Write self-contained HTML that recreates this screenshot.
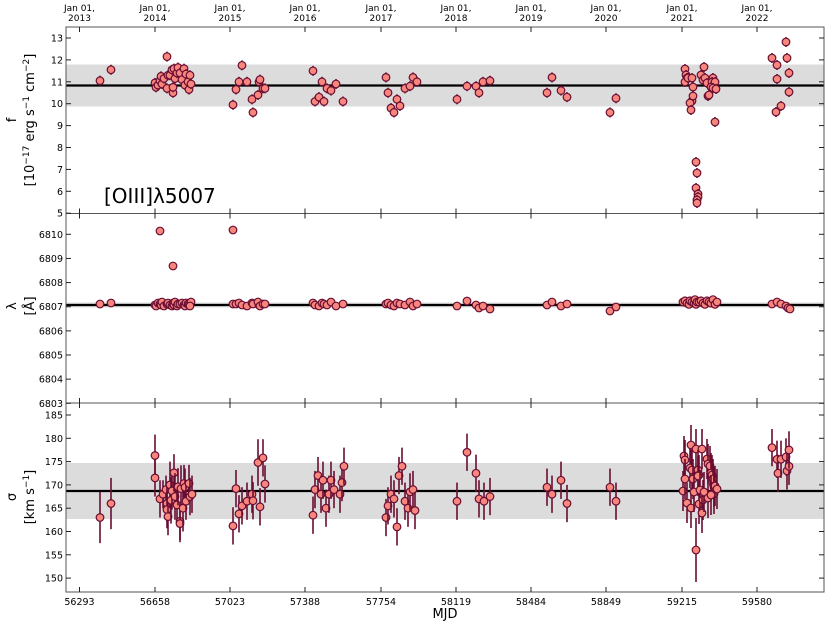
<!DOCTYPE html>
<html><head><meta charset="utf-8"><style>
body{margin:0;background:#fff;}
svg{display:block;font-family:"DejaVu Sans","Liberation Sans",sans-serif;}
</style></head><body>
<svg id="s" width="830" height="626" viewBox="0 0 830 626" xmlns="http://www.w3.org/2000/svg">
<rect width="830" height="626" fill="#fff"/>
<!-- bands -->
<rect x="66" y="64.5" width="758" height="42" fill="#dcdcdc"/>
<rect x="66" y="302.5" width="758" height="5" fill="#dcdcdc"/>
<rect x="66" y="463" width="758" height="56" fill="#dcdcdc"/>
<line x1="66" x2="824" y1="85.5" y2="85.5" stroke="#000" stroke-width="2.2"/>
<line x1="66" x2="824" y1="305" y2="305" stroke="#000" stroke-width="2.2"/>
<line x1="66" x2="824" y1="491" y2="491" stroke="#000" stroke-width="2.2"/>
<g id="pts"></g>
<g id="ax" stroke="#555" fill="none" stroke-width="1">
<rect x="66" y="27" width="758" height="186.5"/>
<rect x="66" y="213.5" width="758" height="189.5"/>
<rect x="66" y="403" width="758" height="189"/>
</g>
<g id="tk" stroke="#222" stroke-width="1"></g>
<g font-size="9" text-anchor="middle" fill="#000">
<text x="79.5" y="11">Jan 01,</text><text x="79.5" y="21">2013</text>
<text x="155" y="11">Jan 01,</text><text x="155" y="21">2014</text>
<text x="230" y="11">Jan 01,</text><text x="230" y="21">2015</text>
<text x="305" y="11">Jan 01,</text><text x="305" y="21">2016</text>
<text x="381" y="11">Jan 01,</text><text x="381" y="21">2017</text>
<text x="456" y="11">Jan 01,</text><text x="456" y="21">2018</text>
<text x="531" y="11">Jan 01,</text><text x="531" y="21">2019</text>
<text x="606" y="11">Jan 01,</text><text x="606" y="21">2020</text>
<text x="682" y="11">Jan 01,</text><text x="682" y="21">2021</text>
<text x="757" y="11">Jan 01,</text><text x="757" y="21">2022</text>
</g>
<g font-size="9.5" text-anchor="middle">
<text x="79.5" y="605">56293</text><text x="155" y="605">56658</text><text x="230" y="605">57023</text><text x="305" y="605">57388</text><text x="381" y="605">57754</text><text x="456" y="605">58119</text><text x="531" y="605">58484</text><text x="606" y="605">58849</text><text x="682" y="605">59215</text><text x="757" y="605">59580</text>
</g>
<text x="445" y="618" font-size="13" text-anchor="middle">MJD</text>
<g id="yl" font-size="9.5" text-anchor="end"></g>
<text x="104" y="203" font-size="20">[OIII]λ5007</text>
<g font-size="13" text-anchor="middle">
<text transform="translate(16,120) rotate(-90)">f</text>
<text transform="translate(34,120) rotate(-90)">[10<tspan font-size="9" dy="-5">−17</tspan><tspan dy="5"> erg s</tspan><tspan font-size="9" dy="-5">−1</tspan><tspan dy="5"> cm</tspan><tspan font-size="9" dy="-5">−2</tspan><tspan dy="5">]</tspan></text>
<text transform="translate(16,306) rotate(-90)">λ</text>
<text transform="translate(34,306) rotate(-90)">[Å]</text>
<text transform="translate(16,497) rotate(-90)">σ</text>
<text transform="translate(34,497) rotate(-90)">[km s<tspan font-size="9" dy="-5">−1</tspan><tspan dy="5">]</tspan></text>
</g>
</svg>
<script>
var NS="http://www.w3.org/2000/svg";
function el(p,t,a){var e=document.createElementNS(NS,t);for(var k in a)e.setAttribute(k,a[k]);p.appendChild(e);return e;}
var tk=document.getElementById('tk'),yl=document.getElementById('yl'),pts=document.getElementById('pts');
var xs=[79.5,155,230,305,381,456,531,606,682,757];
[[27,213.5],[213.5,403],[403,592]].forEach(function(b){xs.forEach(function(x){el(tk,'line',{x1:x,x2:x,y1:b[0],y2:b[0]+5});el(tk,'line',{x1:x,x2:x,y1:b[1],y2:b[1]-5});});});
function ytick(y,l){el(tk,'line',{x1:66,x2:71,y1:y,y2:y});el(tk,'line',{x1:824,x2:819,y1:y,y2:y});var t=el(yl,'text',{x:63,y:y+3.5});t.textContent=l;}
for(var v=5;v<=13;v++)ytick(38+(13-v)*21.9,v);
for(var v=6803;v<=6810;v++)ytick(234.3+(6810-v)*24.14,v);
for(var v=150;v<=185;v+=5)ytick(415+(185-v)*4.66,v);
var F="#f7867d",S="#6a0d32";
function dot(x,y,e){if(e)el(pts,'line',{x1:x,x2:x,y1:y-e,y2:y+e,stroke:S,'stroke-width':1.6});el(pts,'circle',{cx:x,cy:y,r:3.8,fill:F,stroke:S,'stroke-width':1.2});}
function fy(v){return 38+(13-v)*21.9;}
var p1=[[100,11.05],[111,11.55],[155,10.95],[156,10.75],[158,10.85],[160,11.05],[161,11.25],[162,10.9],[164,11.15],[167,10.7],[167,12.15],[168,11.3],[170,11.3],[172,11.55],[173,10.5],[173,10.75],[174,11.6],[175,11.15],[177,11.4],[178,11.65],[180,11.4],[182,11.1],[184,11.6],[185,10.85],[186,11.35],[188,11.0],[189,10.65],[191,10.9],[190,11.3],
[233,9.95],[236,10.65],[239,11.0],[242,11.75],[247,11.0],[252,10.2],[253,9.6],[259,11.0],[258,10.4],[260,11.1],[263,10.7],[265,10.7],
[313,11.5],[315,10.1],[319,10.3],[322,11.0],[324,10.1],[327,10.7],[331,10.6],[336,10.9],[343,10.1],
[386,11.2],[388,10.5],[391,9.8],[394,9.6],[397,10.2],[400,9.9],[405,10.7],[410,10.8],[413,11.2],[417,11.0],
[457,10.2],[467,10.8],[476,10.8],[479,10.5],[483,11.0],[490,11.05],[547,10.5],[552,11.2],[561,10.6],[567,10.3],[610,9.6],[616,10.25]];
p1.forEach(function(p){dot(p[0],fy(p[1]),5);});
[[685,69],[686,75],[687,78],[685,82],[688,78],[692,78],[693,87],[692,101],[690,103],[691,110],[693,96],[704,67],[701,75],[703,80],[705,78],[707,83],[713,78],[712,82],[715,82],[708,96],[709,95],[711,87],[713,88],[716,89],[715,122],[696,162],[697,173],[696,188],[698,194],[698,197],[697,200],[697,203],[772,58],[777,65],[777,79],[776,112],[781,106],[786,42],[787,58],[789,73],[789,92]].forEach(function(p){dot(p[0],p[1],5);});
// panel 2
var off=[0,-1,1,2,-1,0,1,-2,2,0];
p1.forEach(function(p,i){var y=304+off[i%10];if(p[0]>=455&&p[0]<500)y=304+[2,-3,1,4,2,5][i%6];if(p[0]>600)y=[311,307][i%2];dot(p[0],y,0);});
[[160,231],[173,266],[233,230]].forEach(function(p){dot(p[0],p[1],0);});
[683,685,687,689,690,692,694,695,696,697,699,701,703,705,707,709,711,713,715,717].forEach(function(x,i){dot(x,302+off[i%10]*1.2,0);});
[[772,304],[777,302],[781,304],[786,306],[788,308],[790,309]].forEach(function(p){dot(p[0],p[1],0);});
// panel 3
function sy(v){return 415+(185-v)*4.66;}
[[100,163,5.5],[111,166,5.5],[155,176.3,4.5],[155,171.5,4],[160,167,4],[163,168,3],[166,169,3],[167,166,4],[167,164.7,4],[168,163.2,4],[170,170,5],[171,166.7,5],[172,168.7,4],[174,172.6,4],[175,167.5,5],[177,165.7,4],[178,169.6,4],[180,162.2,4],[180,161.7,4],[181,169.2,5],[183,165,5],[184,170.3,4],[185,169.5,4],[186,166.5,4],[189,170.3,4],[190,167.5,4],[192,168,4],[233,161.2,4],[236,169.2,4],[239,163.8,4],[242,165.5,4],[247,166.5,4],[252,168,4],[253,166.6,4],[258,174.8,5],[260,165.3,4],[263,175.8,4],[265,170.2,4],
[313,163.5,4],[315,169,4],[318,172,4],[321,168,4],[323,171,4],[326,165,4],[329,168,4],[331,171,4],[334,169,4],[340,168,4],[342,170.5,4],[344,174,4],
[386,163,4],[388,165.5,4],[391,168,4],[394,167,4],[397,161,4],[399,172,4],[402,174,4],[405,166.5,4],[408,165,4],[410,168.5,4],[413,169,4],[415,164.5,4],
[457,166.5,4],[467,177,4],[476,172.5,4],[479,167,4],[484,166.5,4],[490,167.5,4],[547,169.5,4],[552,168,4],[561,171,4],[567,166,4],[610,169.5,4],[616,166.5,4],
[772,178,4],[777,175.5,4],[778,172.5,4],[781,175.5,4],[786,176,4],[787,173,4],[789,174,4],[789,177.5,4]].forEach(function(p){dot(p[0],sy(p[1]),p[2]*4.66);});
[[684,456],[685,460],[691,445],[696,449],[702,449],[683,491],[685,479],[687,503],[690,468],[691,508],[692,470],[693,479],[694,492],[698,470],[699,475],[698,476],[699,504],[700,490],[703,500],[702,513],[704,492],[707,459],[708,464],[710,466],[711,473],[712,475],[713,479],[714,487],[714,494],[715,486],[717,489],[708,498],[711,495]].forEach(function(p){dot(p[0],p[1],20);});
dot(696,550,32);
</script>
</body></html>
